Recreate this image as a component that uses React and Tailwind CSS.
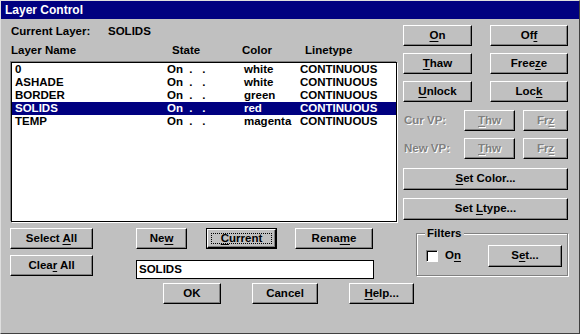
import React from 'react';

const font = { fontFamily: '"Liberation Sans", Arial, sans-serif' };

const layers = [
    { name: "0", color: "white" },
    { name: "ASHADE", color: "white" },
    { name: "BORDER", color: "green" },
    { name: "SOLIDS", color: "red", sel: true },
    { name: "TEMP", color: "magenta" },
];

const U = ({ children }) => <span className="underline underline-offset-2">{children}</span>;

const Btn = ({ children, className = "", disabled }) => (
    <div className={`flex items-center justify-center bg-[#c0c0c0] border border-t-white border-l-white border-r-black border-b-black shadow-[inset_-1px_-1px_0_#808080] text-[11.5px] font-bold leading-none whitespace-pre ${disabled ? "text-[#808080] [text-shadow:1px_1px_0_#fff]" : "text-black"} ${className}`}>
        <span>{children}</span>
    </div>
);

export default function App() {
    return (
        <div className="w-[580px] h-[334px] bg-[#c0c0c0] border border-t-[#dfdfdf] border-l-[#dfdfdf] border-r-[#404040] border-b-[#404040] text-black font-bold text-[11.5px] overflow-hidden" style={font}>
            {/* TITLE */}
            <div className="h-[18px] bg-[#000080] text-white flex items-center pl-[4px] text-[12px]">Layer Control</div>

            {/* TOP */}
            <div className="flex pt-[6px] pl-[9px]">
                <div className="w-[387px] flex flex-col">
                    <div className="flex h-[14px] items-center pl-[1px]">
                        <span className="w-[97px]">Current Layer:</span>
                        <span>SOLIDS</span>
                    </div>
                    <div className="flex h-[14px] items-center mt-[5px] pl-[1px]">
                        <span className="w-[161px]">Layer Name</span>
                        <span className="w-[70px]">State</span>
                        <span className="w-[63px]">Color</span>
                        <span>Linetype</span>
                    </div>
                    <div className="mt-[4px] ml-[1px] w-[386px] h-[160px] bg-white border border-black shadow-[-1px_-1px_0_#808080,1px_1px_0_#fff]">
                        {layers.map(l =>
                            <div key={l.name} className={`flex h-[13px] items-center leading-[13px] pl-[3px] ${l.sel ? "bg-[#000080] text-white" : ""}`}>
                                <span className="w-[152px]">{l.name}</span>
                                <span className="w-[77px] whitespace-pre">On  .   .</span>
                                <span className="w-[56px]">{l.color}</span>
                                <span>CONTINUOUS</span>
                            </div>
                        )}
                    </div>
                </div>

                <div className="w-[165px] ml-[6px] flex flex-col">
                    <div className="flex justify-between">
                        <Btn className="w-[69px] h-[21px]"><U>O</U>n</Btn>
                        <Btn className="w-[78px] h-[21px]">Of<U>f</U></Btn>
                    </div>
                    <div className="flex justify-between mt-[7px]">
                        <Btn className="w-[69px] h-[21px]"><U>T</U>haw</Btn>
                        <Btn className="w-[78px] h-[21px]">Free<U>z</U>e</Btn>
                    </div>
                    <div className="flex justify-between mt-[7px]">
                        <Btn className="w-[69px] h-[21px]"><U>U</U>nlock</Btn>
                        <Btn className="w-[78px] h-[21px]">Loc<U>k</U></Btn>
                    </div>
                    <div className="flex items-center mt-[8px]">
                        <span className="w-[61px] pl-[1px] text-[#808080] [text-shadow:1px_1px_0_#fff]">Cur VP:</span>
                        <Btn disabled className="w-[51px] h-[21px]"><U>T</U>hw</Btn>
                        <Btn disabled className="w-[45px] h-[21px] ml-[8px]">Fr<U>z</U></Btn>
                    </div>
                    <div className="flex items-center mt-[7px]">
                        <span className="w-[61px] pl-[1px] text-[#808080] [text-shadow:1px_1px_0_#fff]">New VP:</span>
                        <Btn disabled className="w-[51px] h-[21px]"><U>T</U>hw</Btn>
                        <Btn disabled className="w-[45px] h-[21px] ml-[8px]">Fr<U>z</U></Btn>
                    </div>
                    <Btn className="w-[165px] h-[22px] mt-[9px]"><U>S</U>et Color...</Btn>
                    <Btn className="w-[165px] h-[22px] mt-[8px]">Set <U>L</U>type...</Btn>
                </div>
            </div>

            {/* BOTTOM */}
            <div className="flex mt-[6px] pl-[9px]">
                <div className="w-[83px] shrink-0 flex flex-col">
                    <Btn className="h-[21px]">Select <U>A</U>ll</Btn>
                    <Btn className="h-[21px] mt-[6px]">Clea<U>r</U> All</Btn>
                </div>

                <div className="w-[279px] shrink-0 ml-[42px] flex flex-col">
                    <div className="flex">
                        <Btn className="w-[51px] h-[21px] ml-[1px]">Ne<U>w</U></Btn>
                        <div className="w-[71px] h-[21px] ml-[19px] border border-black flex">
                            <Btn className="flex-1 relative">
                                <div className="absolute inset-[3px] border border-dotted border-black" />
                                <U>C</U>urrent
                            </Btn>
                        </div>
                        <Btn className="w-[78px] h-[21px] ml-[18px]">Rena<U>m</U>e</Btn>
                    </div>
                    <div className="w-[238px] h-[19px] ml-[1px] mt-[11px] bg-white border border-black flex items-center pl-[2px]">SOLIDS</div>
                    <div className="flex mt-[4px]">
                        <Btn className="w-[58px] h-[21px] ml-[28px]">OK</Btn>
                        <Btn className="w-[67px] h-[21px] ml-[31px]">Cancel</Btn>
                        <Btn className="w-[65px] h-[21px] ml-[31px]"><U>H</U>elp...</Btn>
                    </div>
                </div>

                <div className="w-[152px] shrink-0 h-[43px] ml-[2px] mt-[5px] relative border border-[#808080] shadow-[inset_1px_1px_0_#fff,1px_1px_0_#fff] flex items-center">
                    <span className="absolute left-[8px] top-[-8px] px-[2px] bg-[#c0c0c0] leading-[14px]">Filters</span>
                    <div className="w-[12px] h-[12px] ml-[9px] mt-[3px] bg-white border border-t-[#808080] border-l-[#808080] border-r-white border-b-white shadow-[inset_1px_1px_0_#000]" />
                    <span className="ml-[7px] mt-[3px]">O<U>n</U></span>
                    <Btn className="w-[74px] h-[22px] ml-[27px] mt-[3px]">S<U>e</U>t...</Btn>
                </div>
            </div>
        </div>
    );
}
